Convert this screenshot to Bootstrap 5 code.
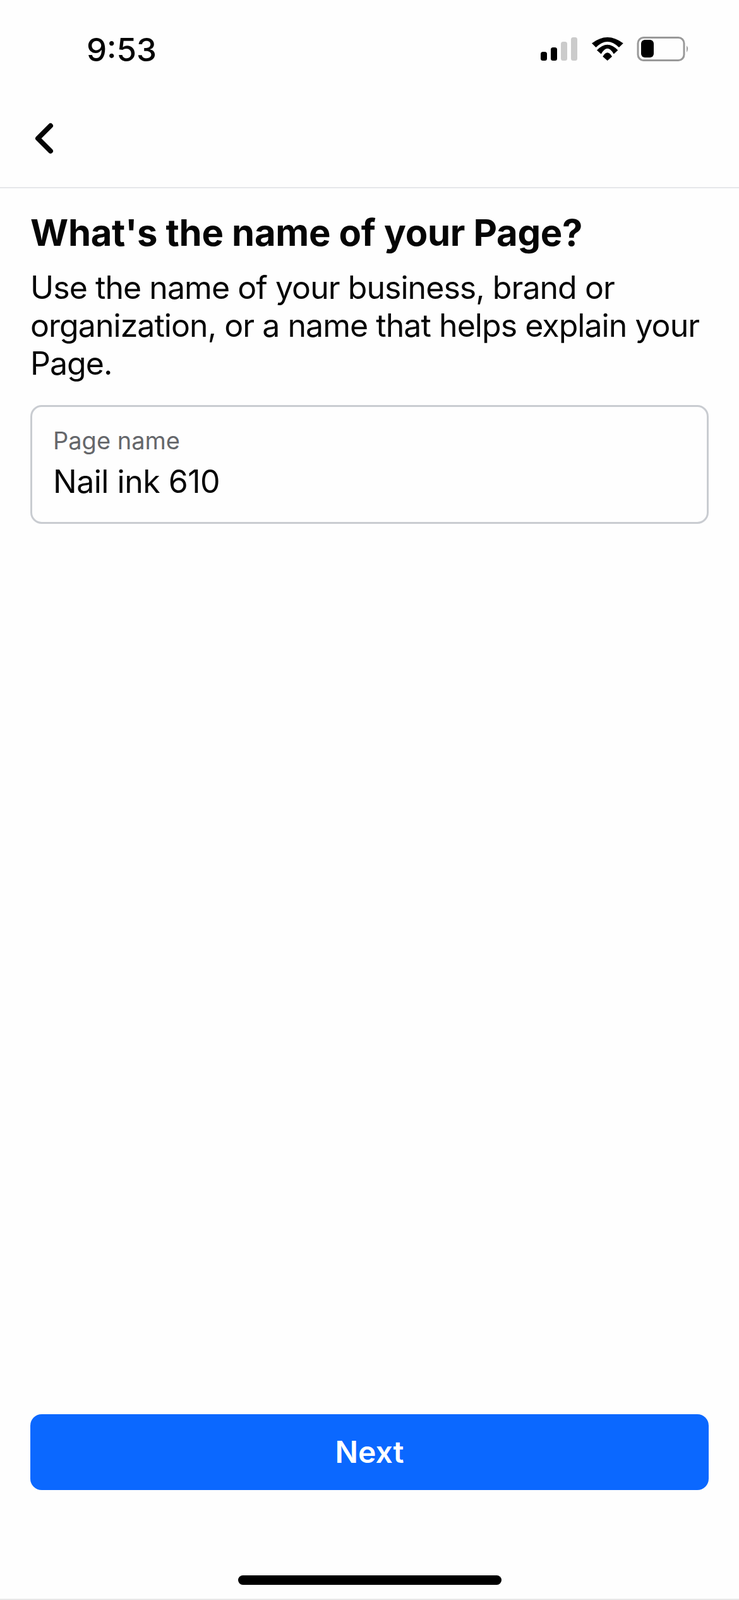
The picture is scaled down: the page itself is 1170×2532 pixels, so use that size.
<!DOCTYPE html>
<html lang="en">
  <head>
    <meta charset="UTF-8" />
    <meta name="viewport" content="width=device-width, initial-scale=1.0" />
    <title>Page name</title>
    <link
      href="https://cdn.jsdelivr.net/npm/bootstrap@5.3.2/dist/css/bootstrap.min.css"
      rel="stylesheet"
    />
    <style>
      body {
        background: #fefefe;
        font-family: Inter, "Liberation Sans", sans-serif;
        color: #050505;
      }
      .screen {
        height: 2532px;
        border-bottom: 2px solid #e8e8e8;
      }
      .status-bar {
        height: 100px;
        padding: 58px 79px 0 137px;
      }
      .status-time {
        font-size: 51px;
        font-weight: 500;
        line-height: 66px;
        margin-top: -12px;
      }
      .top-bar {
        height: 198px;
        padding: 41px 0 0 50px;
        border-bottom: 2px solid #e6e7ea;
      }
      .page-body {
        padding: 35px 48px 0;
      }
      .page-title {
        font-size: 58px;
        font-weight: 700;
        line-height: 70px;
        letter-spacing: -0.3px;
        margin-bottom: 22px;
      }
      .page-desc {
        font-size: 50px;
        line-height: 60px;
        letter-spacing: -0.95px;
        margin-bottom: 36px;
      }
      .name-field {
        height: 188px;
        border: 3px solid #c9ccd1;
        border-radius: 18px;
        padding: 30px 33px 0;
      }
      .name-label {
        font-size: 38px;
        line-height: 46px;
        color: #65676b;
        margin-bottom: 12px;
      }
      .name-input {
        font-size: 50px;
        line-height: 60px;
        letter-spacing: -0.5px;
        color: #050505;
        background: transparent;
        border: 0;
        border-radius: 0;
        padding: 0;
        font-family: inherit;
      }
      .next-wrap {
        padding: 0 48px;
      }
      .next-btn {
        height: 120px;
        font-size: 48px;
        font-weight: 600;
        font-family: inherit;
        background: #0b68ff;
        border: 0;
        border-radius: 18px;
      }
      .home-bar {
        width: 417px;
        height: 15px;
        background: #000;
        border-radius: 8px;
        margin: 135px auto 22px;
      }
    </style>
  </head>
  <body>
    <div class="screen d-flex flex-column">
      <div class="status-bar d-flex justify-content-between align-items-start">
        <span class="status-time">9:53</span>
        <svg width="235" height="40" viewBox="0 0 235 40">
          <rect x="0" y="24" width="10" height="14" rx="3.5" fill="#000" />
          <rect x="16" y="17" width="10" height="21" rx="3.5" fill="#000" />
          <rect x="32" y="8" width="10" height="30" rx="3.5" fill="#cbcbcb" />
          <rect x="48" y="1" width="10" height="37" rx="3.5" fill="#cbcbcb" />
          <path d="M81 10.5 Q105.7 -8.5 130.7 10.5 L124 17 Q105.7 -1 87.5 17 Z" fill="#000" />
          <path d="M89 21.5 Q105.7 3.9 122.3 21.5 L115.7 27.5 Q105.7 9.9 95.7 27.5 Z" fill="#000" />
          <path d="M98.3 31.5 Q105.7 19 113 31.5 L105.7 38 Z" fill="#000" />
          <rect x="154" y="1.5" width="73" height="36" rx="9" fill="none" stroke="#999" stroke-width="3" />
          <rect x="159" y="5" width="20" height="28" rx="6" fill="#000" />
          <path d="M231 14 Q235 19 231 25 Z" fill="#999" />
        </svg>
      </div>
      <div class="top-bar d-flex align-items-center">
        <svg width="40" height="56" viewBox="0 0 40 56">
          <path d="M30 8 L10 28 L30 48" fill="none" stroke="#050505" stroke-width="8" stroke-linecap="round" stroke-linejoin="round" />
        </svg>
      </div>
      <div class="page-body flex-grow-1">
        <h1 class="page-title">What's the name of your Page?</h1>
        <p class="page-desc">Use the name of your business, brand or organization, or a name that helps explain your Page.</p>
        <div class="name-field">
          <label class="name-label d-block" for="pageName">Page name</label>
          <input class="form-control name-input" id="pageName" type="text" value="Nail ink 610" />
        </div>
      </div>
      <div class="next-wrap">
        <button type="button" class="btn btn-primary next-btn w-100">Next</button>
      </div>
      <div class="home-bar"></div>
    </div>
    <script src="https://cdn.jsdelivr.net/npm/bootstrap@5.3.2/dist/js/bootstrap.bundle.min.js"></script>
  </body>
</html>
